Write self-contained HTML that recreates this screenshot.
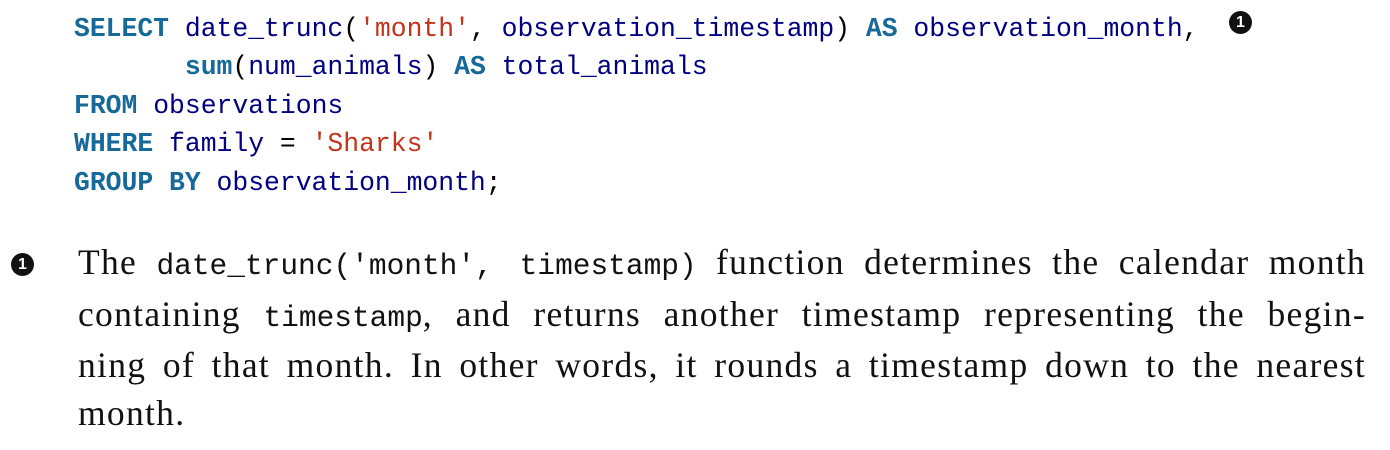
<!DOCTYPE html>
<html><head><style>
body{margin:0;width:1390px;height:450px;background:#fff;overflow:hidden;position:relative}
pre{position:absolute;left:74px;top:10px;margin:0;font-family:"Liberation Mono",monospace;font-size:26.4px;line-height:38.4px;color:#000080}
.k{color:#17699a;font-weight:bold}.s{color:#c4331b}.p{color:#000}
.c{position:absolute;width:23px;height:23px;border-radius:50%;background:#111;color:#fff;font:bold 16px "Liberation Sans",sans-serif;text-align:center;line-height:23px}
.t{position:absolute;left:78px;top:239px;width:1288px;font-family:"Liberation Serif",serif;font-size:35.5px;line-height:47.5px;color:#111;letter-spacing:1.3px}
.t div{text-align:justify;text-align-last:justify;white-space:nowrap}
.t div.l{text-align-last:left}
.t code{font-family:"Liberation Mono",monospace;font-size:29.5px;letter-spacing:0}
</style></head><body>
<pre><span class="k">SELECT</span> date_trunc<span class="p">(</span><span class="s">'month'</span><span class="p">,</span> observation_timestamp<span class="p">)</span> <span class="k">AS</span> observation_month<span class="p">,</span>
       <span class="k">sum</span><span class="p">(</span>num_animals<span class="p">)</span> <span class="k">AS</span> total_animals
<span class="k">FROM</span> observations
<span class="k">WHERE</span> family <span class="p">=</span> <span class="s">'Sharks'</span>
<span class="k">GROUP BY</span> observation_month<span class="p">;</span></pre>
<div class="c" style="left:1229px;top:11px">1</div>
<div class="c" style="left:11px;top:253px">1</div>
<div class="t">
<div>The <code>date_trunc('month', timestamp)</code> function determines the calendar month</div>
<div>containing <code>timestamp</code>, and returns another timestamp representing the begin-</div>
<div>ning of that month. In other words, it rounds a timestamp down to the nearest</div>
<div class="l">month.</div>
</div>
</body></html>
